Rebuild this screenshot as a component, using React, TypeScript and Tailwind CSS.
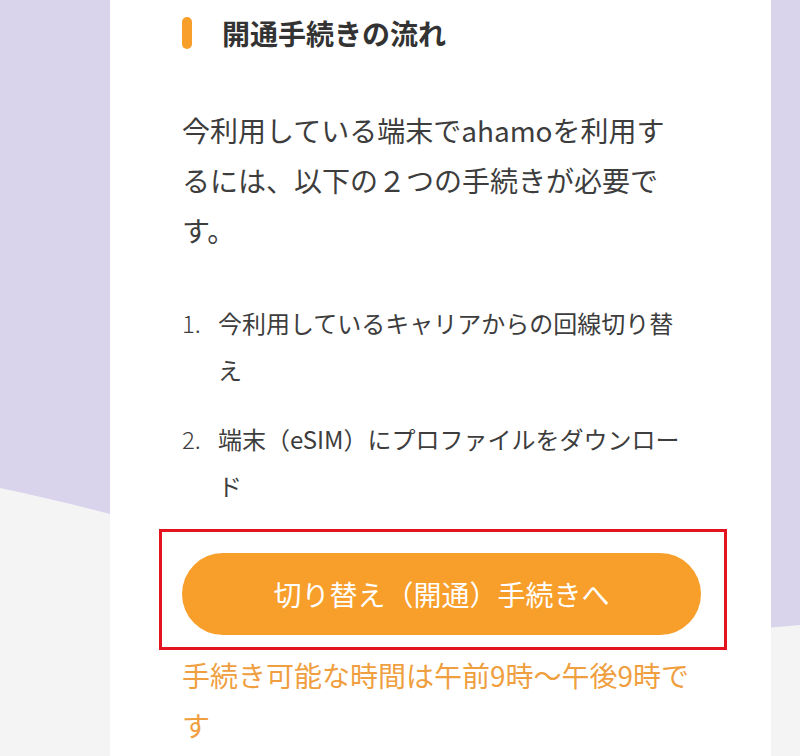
const FONT = '"Noto Sans CJK JP", "Noto Sans", sans-serif'

const steps = [
  '今利用しているキャリアからの回線切り替え',
  '端末（eSIM）にプロファイルをダウンロード',
]

function Wave() {
  return (
    <svg
      className="absolute inset-0 h-full w-full"
      viewBox="0 0 800 756"
      preserveAspectRatio="none"
      aria-hidden
    >
      <path d="M0 488 C 250 540 520 655 800 625 L 800 756 L 0 756 Z" fill="#f4f4f5" />
    </svg>
  )
}

export default function App() {
  return (
    <div
      className="relative h-[756px] w-full overflow-hidden bg-[#d9d3ec]"
      style={{ fontFamily: FONT }}
    >
      <Wave />

      <div className="relative ml-[110px] h-full w-[661px] bg-white pl-[72px] pt-[13px]">
        <div className="w-[503px]">
          {/* Heading */}
          <h2 className="flex h-[40px] items-center">
            <span className="block h-[32px] w-[10px] rounded-full bg-[#f89e2a]" />
            <span className="ml-[30px] text-[28px] font-bold leading-[40px] text-[#333333]">
              開通手続きの流れ
            </span>
          </h2>

          {/* Intro */}
          <p className="mt-[52px] text-[28px] leading-[50px] text-[#3d3d3d]">
            今利用している端末でahamoを利用するには、以下の２つの手続きが必要です。
          </p>

          {/* Steps */}
          <ol className="mt-[44px] flex flex-col gap-[22px]">
            {steps.map((s, i) => (
              <li key={i} className="flex text-[24px] leading-[47px] text-[#3d3d3d]">
                <span className="w-[36px] shrink-0 font-light">{i + 1}.</span>
                <span className="w-[467px]">{s}</span>
              </li>
            ))}
          </ol>

          {/* Highlighted button */}
          <div className="-ml-[23px] mt-[20px] w-[568px] border-[3px] border-[#e3131f] pb-[12px] pl-[20px] pr-[23px] pt-[21px]">
            <button className="flex h-[82px] w-[519px] items-center justify-center rounded-full bg-[#f89e2a] text-[28px] text-white">
              切り替え（開通）手続きへ
            </button>
          </div>

          {/* Note */}
          <p className="w-[519px] text-[28px] leading-[50px] text-[#ef9f3f]">
            手続き可能な時間は午前9時〜午後9時です
          </p>
        </div>
      </div>
    </div>
  )
}
